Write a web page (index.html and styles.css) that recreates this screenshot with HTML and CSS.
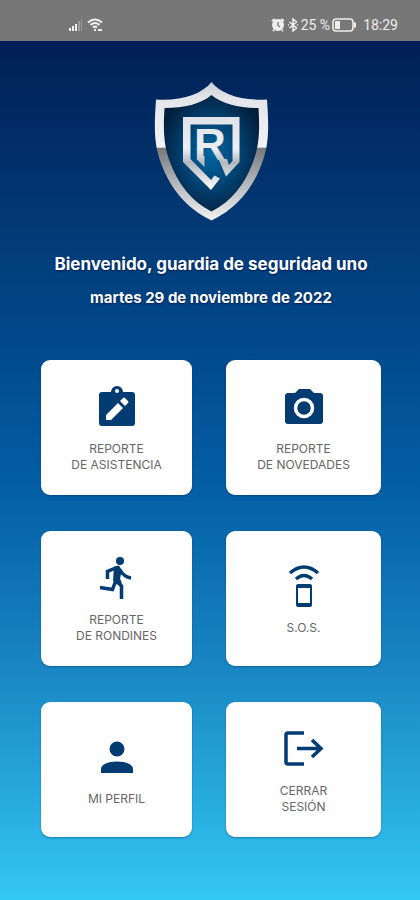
FILE: index.html
```html
<!DOCTYPE html>
<html lang="es">
<head>
  <meta charset="UTF-8">
  <meta name="viewport" content="width=device-width, initial-scale=1">
  <title>Guardia de seguridad</title>
  <link rel="stylesheet" href="styles.css">
</head>
<body>
  <header class="status-bar">
    <div class="status-left">
      <svg width="14" height="14" viewBox="0 0 14 14" fill="#eee">
        <path d="M0 10h2v3H0zM3 8h2v5H3zM6 6h2v7H6z"/>
        <path d="M9 3h2v10H9zM12 1h1v12h-1z" opacity=".3"/>
      </svg>
      <svg width="17" height="14" viewBox="0 0 17 14" fill="none" stroke="#eee" stroke-width="2">
        <path d="M1 4.500Q8 -1.500 15 4.500M3.500 7Q8 3 12.500 7M6 9.500q2-1.800 4 0"/>
        <path d="M8 11v2M11 12h4" />
      </svg>
    </div>
    <div class="status-right">
      <svg width="14" height="14" viewBox="0 0 14 14">
        <path d="M1 3l3-2M13 3l-3-2M3 12l-1 1M11 12l1 1" stroke="#eee" stroke-width="2"/>
        <circle cx="7" cy="7" r="6" fill="#eee"/>
        <path d="M7 4v3.500l2 1.500" fill="none" stroke="#777" stroke-width="1.300"/>
      </svg>
      <svg width="12" height="14" viewBox="0 0 12 14" fill="none" stroke="#eee" stroke-width="1.500">
        <path d="M2.500 4l7 6L6 13V1l3.500 3-7 6M1 7h1M10 7h1"/>
      </svg>
      <span>25 %</span>
      <svg width="25" height="14" viewBox="0 0 25 14">
        <rect x="1" y="1" width="20" height="12" rx="3" fill="none" stroke="#eee" stroke-width="1.600"/>
        <path d="M3 3h5v8H3zM22 4l2 1v4l-2 1z" fill="#eee"/>
      </svg>
      <span class="clock">18:29</span>
    </div>
  </header>

  <main class="home">
    <svg class="logo" viewBox="13 12 116 140" role="img" aria-label="Escudo">
      <defs>
        <linearGradient id="silver" x1="0" y1="0" x2="0" y2="1">
          <stop offset="0" stop-color="#c9ccd3"/>
          <stop offset=".12" stop-color="#e4e6ea"/>
          <stop offset=".47" stop-color="#f1f2f4"/>
          <stop offset=".48" stop-color="#77797d"/>
          <stop offset=".75" stop-color="#b9bbc0"/>
          <stop offset="1" stop-color="#f2f2f4"/>
        </linearGradient>
        <linearGradient id="mark" gradientUnits="userSpaceOnUse" x1="0" y1="46" x2="0" y2="120">
          <stop offset="0" stop-color="#dfe3e9"/>
          <stop offset=".45" stop-color="#eceef2"/>
          <stop offset=".63" stop-color="#b4b8be"/>
          <stop offset="1" stop-color="#fff"/>
        </linearGradient>
        <radialGradient id="inside" cx=".5" cy=".5" r=".55">
          <stop offset="0" stop-color="#0066a0"/>
          <stop offset=".5" stop-color="#024577"/>
          <stop offset="1" stop-color="#031f3d"/>
        </radialGradient>
      </defs>
      <path fill="url(#silver)" d="M71.500 12C81 24 101 31 127 29.500C129 58 129 75 122 93C113 118 97 138 71.500 150.500C46 138 30 118 21 93C14 75 14 58 16 29.500C42 31 62 24 71.500 12z"/>
      <path fill="url(#inside)" d="M71.500 25C82 34 99 38 118.500 38C120 62 119 76 113 92C105 114 92 131 71.500 141.500C51 131 38 114 30 92C24 76 23 62 24.500 38C44 38 61 34 71.500 25z"/>
      <!-- marco y punta inferior -->
      <path fill="url(#mark)" d="M43 47H99.500V92L86 106.500L78.500 89H87L89 95L92.500 91V54.500H50.500V89L71 110L74.500 105.500L80 108.500L71 120L43 92z"/>
      <path fill="url(#mark)" d="M57.500 86h7v11l-7-7z"/>
      <text class="logo-letter" x="54" y="90" fill="url(#mark)">R</text>
    </svg>

    <h1 class="welcome">Bienvenido, guardia de seguridad uno</h1>
    <p class="date">martes 29 de noviembre de 2022</p>

    <nav class="menu">
      <button class="card" type="button">
        <svg class="icon" width="40" height="44" viewBox="0 0 40 44">
          <path fill="#023c73" d="M5 7h9a6 6 0 0 1 12 0h9q3 0 3 3v28q0 3-3 3H5q-3 0-3-3V10q0-3 3-3z"/>
          <circle cx="20" cy="6" r="2" fill="#fff"/>
          <path fill="#fff" d="M9 30l12-12 5 5-12 12H9zM23 16l3-3q1-1 2 0l3 3q1 1 0 2l-3 3z"/>
        </svg>
        <span>REPORTE<br>DE ASISTENCIA</span>
      </button>
      <button class="card" type="button">
        <svg class="icon" width="40" height="44" viewBox="0 0 40 44">
          <path fill="#023c73" d="M4 8h7l4-4h11l4 4h6q3 0 3 3v25q0 3-3 3H4q-3 0-3-3V11q0-3 3-3z"/>
          <circle cx="20" cy="23" r="8.500" fill="none" stroke="#fff" stroke-width="3.500"/>
        </svg>
        <span>REPORTE<br>DE NOVEDADES</span>
      </button>
      <button class="card" type="button">
        <svg class="icon" width="40" height="44" viewBox="0 0 40 44">
          <circle cx="23" cy="5" r="4" fill="#023c73"/>
          <path fill="none" stroke="#023c73" stroke-width="3.500" d="M10.500 23v-7.500l8-3.500M23 14q4 7 11 8M3 31.500l12.500 2L19 24M19.500 25l5 5v13"/>
          <path fill="#023c73" d="M17 10.500l5-1 3 5-2 8 2 5-5 1-4-4z"/>
        </svg>
        <span>REPORTE<br>DE RONDINES</span>
      </button>
      <button class="card" type="button">
        <svg class="icon" width="40" height="44" viewBox="0 0 40 44">
          <path fill="none" stroke="#023c73" stroke-width="3.500" d="M6 9Q20-3 34 9M12 15q8-7 16 0"/>
          <path fill="#023c73" fill-rule="evenodd" d="M14 20h12q2 0 2 2v19q0 2-2 2H14q-2 0-2-2V22q0-2 2-2zM14 24v15h12V24z"/>
        </svg>
        <span>S.O.S.</span>
      </button>
      <button class="card" type="button">
        <svg class="icon" width="40" height="44" viewBox="0 0 40 44">
          <circle cx="20" cy="14" r="7.500" fill="#023c73"/>
          <path fill="#023c73" d="M4 38v-4c0-10 32-10 32 0v4z"/>
        </svg>
        <span>MI PERFIL</span>
      </button>
      <button class="card" type="button">
        <svg class="icon" width="40" height="44" viewBox="0 0 40 44">
          <path fill="none" stroke="#023c73" stroke-width="3.500" d="M20 6H4q-2 0-2 2v27q0 2 2 2h16M13 21.500h24M28 13l9 8.500-9 8.500"/>
        </svg>
        <span>CERRAR<br>SESIÓN</span>
      </button>
    </nav>
  </main>
</body>
</html>
```
FILE: styles.css
```css
* {
  box-sizing: border-box;
}

body {
  margin: 0;
  min-height: 100vh;
  font-family: Inter, "Open Sans", sans-serif;
  background: linear-gradient(to bottom, #00194f 0%, #023c78 27%, #014a8d 39%, #0561a8 56%, #1a88c4 75%, #2cb8e8 94%, #34c8f4 100%);
}

/* barra de estado */
.status-bar {
  display: flex;
  justify-content: space-between;
  height: 41px;
  padding: 9px 22px 0 69px;
  background: #777;
  color: #eee;
  font: 14px/32px Roboto, sans-serif;
}

.status-left,
.status-right {
  display: flex;
  align-items: center;
  gap: 2px;
}

.status-left {
  gap: 4px;
}

.clock {
  margin-left: 4px;
}

.home {
  display: flex;
  flex-direction: column;
  align-items: center;
  padding: 41px 39px 61px 41px;
  color: #fff;
}

.logo {
  width: 116px;
  height: 140px;
}

.logo-letter {
  font: bold 44px "Liberation Sans", sans-serif;
}

.welcome {
  margin: 30px 0 0;
  font-size: 17px;
  line-height: 24px;
  text-align: center;
  text-shadow: 0 1px 2px #001a4d;
}

.date {
  margin: 12px 0 0;
  font-size: 15px;
  font-weight: bold;
  line-height: 20px;
  text-shadow: 0 1px 2px #001a4d;
}

/* tarjetas del menú */
.menu {
  display: grid;
  grid-template-columns: 151fr 155fr;
  gap: 36px 34px;
  width: 100%;
  margin-top: 52px;
}

.card {
  display: flex;
  flex-direction: column;
  align-items: center;
  justify-content: center;
  gap: 12px;
  min-height: 135px;
  padding: 2px 0 0;
  border: none;
  border-radius: 9px;
  background: #fefefe;
  color: #666;
  font-family: inherit;
  font-size: 12px;
  line-height: 16px;
  cursor: pointer;
  box-shadow: 0 1px 2px rgba(0, 40, 80, 0.4);
}

.card:active {
  background: #e8f1f8;
}
```
